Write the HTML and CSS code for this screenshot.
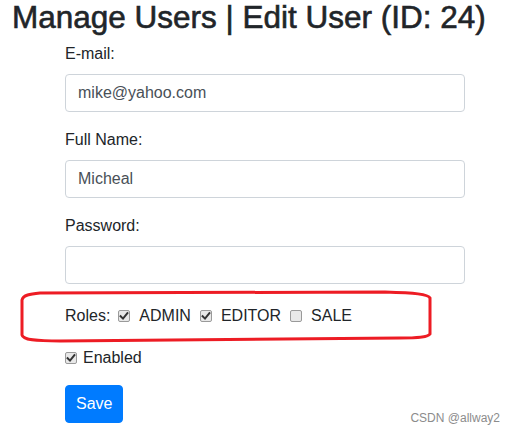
FILE: index.html
```html
<!DOCTYPE html>
<html>
<head>
<meta charset="utf-8">
<link rel="stylesheet" href="styles.css">
</head>
<body>
<div class="page">
  <h2 class="title">Manage Users | Edit User (ID: 24)</h2>
  <form class="form">
    <div class="group">
      <label class="label">E-mail:</label>
      <input class="control" type="text" value="mike@yahoo.com">
    </div>
    <div class="group">
      <label class="label">Full Name:</label>
      <input class="control" type="text" value="Micheal">
    </div>
    <div class="group">
      <label class="label">Password:</label>
      <input class="control" type="password" value="">
    </div>
    <div class="roles">
      <span class="roles-label">Roles:</span>
      <span class="check"><span class="box"><svg viewBox="0 0 12 12" width="12" height="12"><path d="M2.6 6.2 L5 8.6 L9.4 3.2" class="tick"/></svg></span><span>ADMIN</span></span>
      <span class="check"><span class="box"><svg viewBox="0 0 12 12" width="12" height="12"><path d="M2.6 6.2 L5 8.6 L9.4 3.2" class="tick"/></svg></span><span>EDITOR</span></span>
      <span class="check"><span class="box"></span><span>SALE</span></span>
    </div>
    <div class="enabled">
      <span class="check tight"><span class="box"><svg viewBox="0 0 12 12" width="12" height="12"><path d="M2.6 6.2 L5 8.6 L9.4 3.2" class="tick"/></svg></span><span>Enabled</span></span>
    </div>
    <button class="btn" type="button">Save</button>
  </form>
  <svg class="annot" width="515" height="434" viewBox="0 0 515 434">
    <path d="M22 300 C23 295 30 294 40 293 L385 292 C415 293 428 294 430 298 L430 334 C428 337 420 338 400 338 L60 341 C35 341 23 340 22 335 Z" class="ring"/>
  </svg>
  <div class="watermark">CSDN @allway2</div>
</div>
</body>
</html>
```
FILE: styles.css
```css
html, body {
  margin: 0;
  padding: 0;
  background: #ffffff;
}
body {
  font-family: "Liberation Sans", Arial, sans-serif;
  font-size: 16px;
  color: #212529;
}
.page {
  position: relative;
  width: 515px;
  height: 434px;
  overflow: hidden;
}
.title {
  margin: 0 0 7px 0;
  padding-left: 12px;
  font-size: 31.5px;
  line-height: 35px;
  font-weight: 400;
  -webkit-text-stroke: 0.6px #212529;
  white-space: nowrap;
}
.form {
  margin: 0 0 0 65px;
  width: 400px;
}
.group {
  margin-bottom: 16px;
}
.label {
  display: block;
  line-height: 24px;
  margin-bottom: 8px;
}
.control {
  display: block;
  box-sizing: border-box;
  width: 100%;
  height: 38px;
  margin: 0;
  padding: 6px 12px;
  border: 1px solid #ced4da;
  border-radius: 4px;
  font-family: inherit;
  font-size: 16px;
  color: #495057;
  background: #fff;
  outline: none;
}
.roles {
  display: flex;
  align-items: center;
  gap: 9px;
  margin-top: 20px;
  line-height: 24px;
  height: 24px;
}
.roles-label {
  margin-right: -1px;
}
.check {
  display: inline-flex;
  align-items: center;
  gap: 9px;
}
.check.tight {
  gap: 6px;
}
.box {
  display: inline-block;
  box-sizing: border-box;
  width: 12px;
  height: 12px;
  border: 1px solid #9a9a9a;
  border-radius: 2px;
  background: #e8e8e8;
  position: relative;
}
.box svg {
  position: absolute;
  left: -1px;
  top: -1px;
}
.tick {
  fill: none;
  stroke: #333;
  stroke-width: 2;
  stroke-linecap: square;
}
.enabled {
  margin-top: 18px;
  line-height: 24px;
  height: 24px;
  display: flex;
  align-items: center;
}
.btn {
  margin-top: 15px;
  display: block;
  height: 38px;
  padding: 6px 10px;
  border: 1px solid #007bff;
  border-radius: 4px;
  background: #007bff;
  color: #fff;
  font-family: inherit;
  font-size: 16px;
  line-height: 24px;
}
.annot {
  position: absolute;
  left: 0;
  top: 0;
  pointer-events: none;
}
.ring {
  fill: none;
  stroke: #ed1c24;
  stroke-width: 3;
}
.watermark {
  position: absolute;
  right: 15px;
  top: 410px;
  font-size: 12px;
  line-height: 16px;
  color: #8c8c8c;
}
```
